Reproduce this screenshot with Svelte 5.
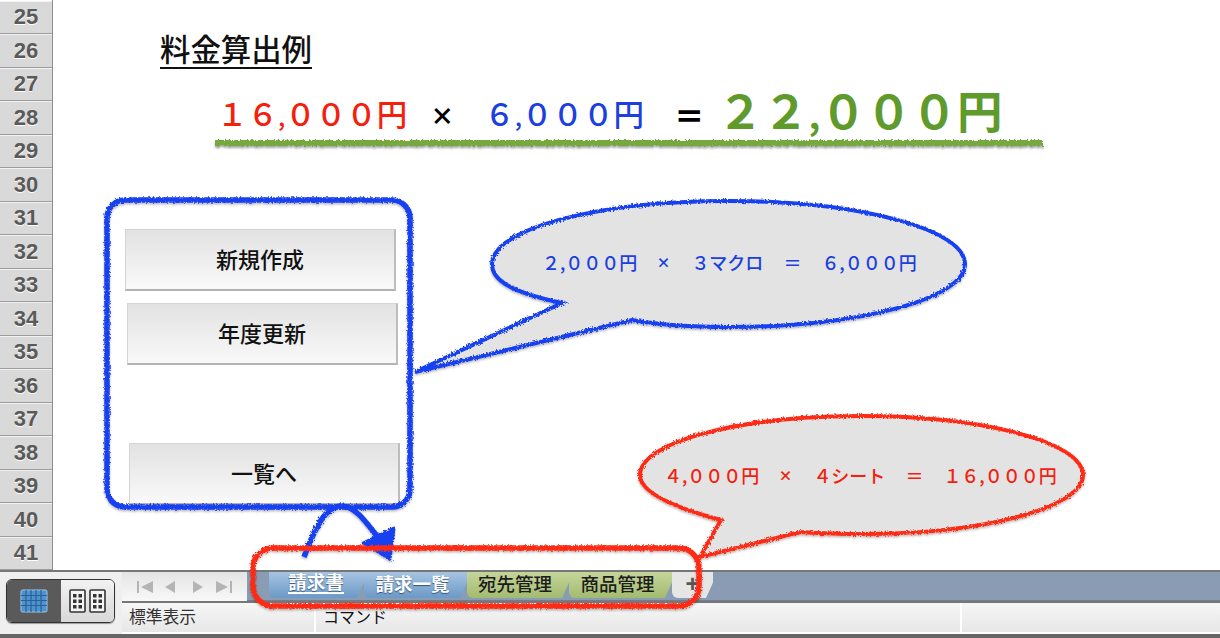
<script>
  const rows = Array.from({ length: 17 }, (_, i) => 25 + i);

  // floating buttons on the sheet, page coords minus the gutter
  const buttons = [
    { label: '新規作成', x: 72, y: 229 },
    { label: '年度更新', x: 74, y: 303 },
    { label: '一覧へ', x: 76, y: 443 }
  ];

  const tabs = [
    { label: '請求書', kind: 'blue active', w: 95 },
    { label: '請求一覧', kind: 'blue', w: 103 },
    { label: '宛先管理', kind: 'green', w: 102 },
    { label: '商品管理', kind: 'green', w: 103 }
  ];
</script>

<div class="window">
  <div class="sheet">
    <div class="gutter">
      {#each rows as n}
        <div class="rownum">{n}</div>
      {/each}
    </div>
    <div class="canvas">
      <h1 class="title">料金算出例</h1>
      <div class="formula">
        <span class="red">１６<i>,</i>０００円</span>
        <span class="op first">×</span>
        <span class="blue">６<i>,</i>０００円</span>
        <span class="op second">＝</span>
        <span class="green">２２<i>,</i>０００円</span>
      </div>
      {#each buttons as b}
        <div class="macro" style="left: {b.x}px; top: {b.y}px">{b.label}</div>
      {/each}
    </div>
  </div>

  <div class="bottom">
    <div class="views">
      <div class="toggle">
        <div class="seg on">
          <svg width="28" height="24" viewBox="0 0 28 24">
            <rect x="1" y="1" width="26" height="22" rx="1.5" fill="#4d93cf" stroke="#9cc8ea" />
            <path d="M1 6.5H27M1 11.5H27M1 16.5H27M6 1V23M11 1V23M16 1V23M21 1V23" stroke="#2c5f94" stroke-width="1.2" />
          </svg>
        </div>
        <div class="seg">
          <svg width="37" height="24" viewBox="0 0 37 24">
            <g fill="#f4f4f4" stroke="#333" stroke-width="1.6">
              <rect x="1" y="1" width="15" height="22" rx="1" />
              <rect x="21" y="1" width="15" height="22" rx="1" />
            </g>
            <g fill="#333">
              <rect x="4" y="5" width="3.5" height="3.5" /><rect x="9.5" y="5" width="3.5" height="3.5" />
              <rect x="4" y="10.5" width="3.5" height="3.5" /><rect x="9.5" y="10.5" width="3.5" height="3.5" />
              <rect x="4" y="16" width="3.5" height="3.5" /><rect x="9.5" y="16" width="3.5" height="3.5" />
              <rect x="24" y="5" width="3.5" height="3.5" /><rect x="29.5" y="5" width="3.5" height="3.5" />
              <rect x="24" y="10.5" width="3.5" height="3.5" /><rect x="29.5" y="10.5" width="3.5" height="3.5" />
              <rect x="24" y="16" width="3.5" height="3.5" /><rect x="29.5" y="16" width="3.5" height="3.5" />
            </g>
          </svg>
        </div>
      </div>
    </div>
    <div class="right">
      <div class="tabrow">
        <div class="nav">
          <svg width="125" height="14" viewBox="0 0 125 14" fill="#b4b4b4">
            <rect x="15" y="1" width="2" height="12" />
            <path d="M19 7 L31 1V13Z M43 7 L53 1V13Z M71 1 L81 7 L71 13Z M94 1 L106 7 L94 13Z" />
            <rect x="108" y="1" width="2" height="12" />
          </svg>
        </div>
        <div class="tabs">
          {#each tabs as t}
            <div class="tab {t.kind}" style="width: {t.w}px"><span>{t.label}</span></div>
          {/each}
          <div class="tab plus">+</div>
        </div>
      </div>
      <div class="status">
        <div class="cell mode">標準表示</div>
        <div class="cell cmd">コマンド</div>
        <div class="cell rest"></div>
      </div>
    </div>
  </div>

  <svg class="marks" width="1220" height="638" viewBox="0 0 1220 638">
    <defs>
      <filter id="sketch" x="-5%" y="-5%" width="110%" height="110%">
        <feTurbulence type="fractalNoise" baseFrequency="0.6" numOctaves="3" seed="4" result="n" />
        <feDisplacementMap in="SourceGraphic" in2="n" scale="4" result="d" />
        <feGaussianBlur in="d" stdDeviation="0.4" result="soft" />
        <feDropShadow in="soft" dx="0" dy="1.5" stdDeviation="1.2" flood-color="#000" flood-opacity="0.3" />
      </filter>
      <filter id="grass" x="-2%" y="-100%" width="104%" height="300%">
        <feTurbulence type="fractalNoise" baseFrequency="0.45" numOctaves="2" seed="9" result="n" />
        <feDisplacementMap in="SourceGraphic" in2="n" scale="4" result="d" />
        <feDropShadow in="d" dx="0" dy="2" stdDeviation="1.2" flood-color="#000" flood-opacity="0.35" />
      </filter>
    </defs>

    <rect x="215" y="140" width="828" height="6" fill="#74a83e" filter="url(#grass)" />

    <g fill="#e3e3e3" stroke-width="4" stroke-linejoin="miter" filter="url(#sketch)">
      <path stroke="#1840f0"
        d="M415 372 L562 303 C505 291 492 278 492 264 C492 229 598 201 728 201 C858 201 965 229 965 264 C965 299 858 327 728 327 C695 327 660 325 632 320 Z" />
      <path stroke="#ff2c12"
        d="M700 557 L721 520 C665 505 640 490 640 475 C640 442 739 416 861 416 C983 416 1083 442 1083 475 C1083 508 983 534 861 534 C838 534 818 533 800 532 Z" />
    </g>

    <g fill="none" stroke-width="5.5" filter="url(#sketch)">
      <rect x="107" y="200" width="303" height="307" rx="18" stroke="#1840f0" />
      <path stroke="#1840f0" d="M304 557 C316 525 326 507 340 506 C356 505 368 525 380 540" />
      <path stroke="#1840f0" fill="#1840f0" stroke-linejoin="round" stroke-width="3" d="M363 543 L394 528 L390 559 Z" />
      <rect x="253" y="548" width="446" height="58" rx="20" stroke="#ff2c12" />
    </g>
  </svg>

  <div class="note blue-note">
    <span>２,０００円</span><span class="x">×</span><span>３マクロ</span><span class="eq">＝</span><span>６,０００円</span>
  </div>
  <div class="note red-note">
    <span>４,０００円</span><span class="x">×</span><span>４シート</span><span class="eq">＝</span><span>１６,０００円</span>
  </div>
</div>

<style>
  :global(body) {
    margin: 0;
    background: #fff;
  }
  .window {
    position: relative;
    width: 1220px;
    height: 638px;
    overflow: hidden;
    display: flex;
    flex-direction: column;
    font-family: "Noto Sans CJK JP", "Liberation Sans", sans-serif;
  }
  .sheet {
    display: flex;
    height: 570px;
  }
  .gutter {
    width: 52px;
    flex: none;
    border-right: 1px solid #8e8e8e;
    padding-top: 0.5px;
  }
  .rownum {
    height: 33.5px;
    box-sizing: border-box;
    display: flex;
    align-items: center;
    justify-content: center;
    background: #d9d9d9;
    border-top: 1px solid #f2f2f2;
    border-bottom: 1px solid #9c9c9c;
    font: bold 22px "Liberation Sans", sans-serif;
    color: #5a5a5a;
    text-shadow: 0 1px 0 #fff;
  }
  .canvas {
    position: relative;
    flex: 1;
  }
  .title {
    position: absolute;
    left: 107px;
    top: 29px;
    margin: 0;
    font-size: 30.4px;
    font-weight: 500;
    line-height: 38px;
    color: #111;
    border-bottom: 2px solid #111;
  }
  .formula {
    position: absolute;
    left: 164px;
    top: 85px;
    display: flex;
    align-items: center;
    white-space: nowrap;
    font-size: 30.5px;
    font-weight: 500;
    line-height: 56px;
  }
  .formula i {
    font-style: normal;
    font-size: 0.8em;
  }
  .formula .red { color: #f5200c; }
  .formula .blue { color: #1c3fe0; margin-left: 30px; }
  .formula .green { color: #5f9a2d; font-size: 45.5px; font-weight: 700; margin-left: 13px; margin-top: -8px; }
  .op {
    color: #000;
    font-weight: 900;
  }
  .op.first { font-size: 24px; margin-left: 23px; }
  .op.second { margin-left: 30px; }
  .macro {
    position: absolute;
    width: 271px;
    height: 62px;
    box-sizing: border-box;
    display: flex;
    align-items: center;
    justify-content: center;
    padding-bottom: 4px;
    background: linear-gradient(#e2e2e2, #f9f9f9);
    border: 1px solid #d4d4d4;
    border-bottom: 2px solid #b3b3b3;
    border-right: 2px solid #bdbdbd;
    font-size: 22px;
    font-weight: 500;
    color: #111;
  }
  .bottom {
    flex: 1;
    display: flex;
    border-top: 2px solid #777;
    border-bottom: 4px solid #666;
    background: #efefef;
  }
  .views {
    width: 122px;
    flex: none;
    padding: 7px 0 0 6px;
    box-sizing: border-box;
  }
  .toggle {
    width: 109px;
    height: 44px;
    display: flex;
    border: 1px solid #333;
    border-radius: 6px;
    overflow: hidden;
    box-sizing: border-box;
    box-shadow: 0 1px 1px #999;
  }
  .seg {
    flex: 1;
    display: flex;
    align-items: center;
    justify-content: center;
    background: linear-gradient(#f2f2f2, #d8d8d8);
  }
  .seg.on {
    background: #5a5a5a;
  }
  .right {
    flex: 1;
    display: flex;
    flex-direction: column;
  }
  .tabrow {
    display: flex;
    height: 29px;
    border-bottom: 2px solid #777;
  }
  .nav {
    width: 125px;
    flex: none;
    display: flex;
    align-items: center;
    background: linear-gradient(#e4e4e4, #f8f8f8);
  }
  .tabs {
    flex: 1;
    display: flex;
    align-items: flex-start;
    padding-left: 22px;
    background: #8a9cb4;
    border-bottom: 1px solid #6f7e92;
  }
  .tab {
    height: 26px;
    box-sizing: border-box;
    display: flex;
    align-items: center;
    justify-content: center;
    padding: 0 6px 4px 0;
    font-size: 18.5px;
    font-weight: 700;
    line-height: 1;
    border-radius: 0 0 0 6px;
    clip-path: polygon(0 0, 100% 0, 100% 40%, calc(100% - 7px) 100%, 0 100%);
  }
  .tab.blue {
    color: #fff;
    background: linear-gradient(#a6c4e2, #6c99c6);
    text-shadow: 0 1px 1px #33557a;
  }
  .tab.active {
    padding-left: 1px;
    padding-right: 2px;
  }
  .tab.active span {
    border-bottom: 2px solid #fff;
    padding-bottom: 1px;
  }
  .tab.green {
    color: #1c1c1c;
    background: linear-gradient(#c4d59a, #a3bb70);
    font-weight: 500;
  }
  .tab.plus {
    width: 41px;
    padding: 0 0 3px 0;
    background: #e6e6e6;
    color: #555;
    font: bold 24px "Liberation Sans", sans-serif;
  }
  .status {
    flex: 1;
    display: flex;
    gap: 2px;
    padding-bottom: 2px;
    background: #fff;
  }
  .cell {
    display: flex;
    align-items: center;
    padding: 0 0 3px 7px;
    background: linear-gradient(#f6f6f6, #e7e7e7);
    font-size: 16.8px;
    color: #333;
    box-sizing: border-box;
  }
  .mode { width: 192px; }
  .cmd { width: 644px; color: #111; font-size: 16px; }
  .rest { flex: 1; }
  .marks {
    position: absolute;
    left: 0;
    top: 0;
    pointer-events: none;
  }
  .note {
    position: absolute;
    display: flex;
    align-items: center;
    white-space: nowrap;
    font-size: 18px;
    font-weight: 500;
    line-height: 24px;
  }
  .note .x { font-size: 14px; font-weight: 900; margin: 0 21px 0 19px; }
  .note .eq { margin: 0 20px; }
  .blue-note {
    left: 542px;
    top: 250px;
    color: #1c3fe0;
  }
  .red-note {
    left: 664px;
    top: 463px;
    color: #f5200c;
  }
</style>
